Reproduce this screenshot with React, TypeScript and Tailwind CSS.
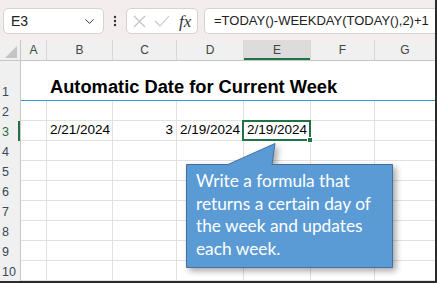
import { ChevronDown } from "lucide-react";

const cols = ["A", "B", "C", "D", "E", "F", "G"];
const colWidths = ["w-[26px]", "w-[66px]", "w-[64px]", "w-[67px]", "w-[67px]", "w-[64px]", "flex-1"];

const cellFont = { fontFamily: '"Liberation Sans", Arial, sans-serif' };

const RowHeader = ({ n, active }: { n: number; active?: boolean }) => (
  <div
    className={`w-[21px] shrink-0 flex items-end pl-[2px] pb-[3px] bg-[#f0f0f0] border-r border-[#c6c6c6] text-[12.5px] leading-none whitespace-nowrap ${
      active ? "text-[#1e6b41] shadow-[inset_-2px_0_0_#217346]" : "text-[#3a4654]"
    }`}
    style={cellFont}
  >
    {n}
  </div>
);

const EmptyRow = ({ n }: { n: number }) => (
  <div className="flex h-[20px]">
    <RowHeader n={n} />
    {colWidths.map((w, i) => (
      <div key={i} className={`${w} shrink-0 border-r border-b border-[#e1e1e1] last:border-r-0`} />
    ))}
  </div>
);

const App = () => {
  return (
    <div className="relative w-[437px] h-[283px] bg-white border-r-2 border-b-2 border-[#2b2b2b] overflow-hidden">
      {/* formula bar */}
      <div className="h-[40px] bg-[#f3eded] flex items-start pt-[8px] pl-[3px]">
        <div className="w-[101px] shrink-0 h-[26px] bg-white border border-[#d6d2d2] rounded-[5px] flex items-center justify-between pl-[7px] pr-[6px]">
          <span className="text-[14px] text-[#222]" style={cellFont}>
            E3
          </span>
          <ChevronDown size={15} strokeWidth={1.6} className="text-[#333]" />
        </div>
        <div className="w-[22px] shrink-0 h-[26px] flex items-center justify-center">
          <svg width="4" height="12" viewBox="0 0 4 12">
            <circle cx="2" cy="2" r="1.2" fill="#333" />
            <circle cx="2" cy="6" r="1.2" fill="#333" />
            <circle cx="2" cy="10" r="1.2" fill="#333" />
          </svg>
        </div>
        <div className="w-[72px] shrink-0 h-[26px] bg-white border border-[#d6d2d2] rounded-[5px] flex items-center pl-[6px] gap-[8px]">
          <svg width="13" height="13" viewBox="0 0 13 13" fill="none" stroke="#c2c2c2" strokeWidth="1.1">
            <path d="M1 1 L12 12 M12 1 L1 12" />
          </svg>
          <svg width="16" height="12" viewBox="0 0 16 12" fill="none" stroke="#c2c2c2" strokeWidth="1.1">
            <path d="M1 6 L6 11 L15 1" />
          </svg>
          <span
            className="italic text-[17px] leading-none text-[#333] ml-[1px]"
            style={{ fontFamily: '"Liberation Serif", "Times New Roman", serif' }}
          >
            fx
          </span>
        </div>
        <div className="ml-[6px] flex-1 min-w-0 h-[26px] bg-white border border-r-0 border-[#d6d2d2] rounded-l-[5px] flex items-center pl-[9px]">
          <span className="text-[13px] text-[#222] whitespace-nowrap" style={cellFont}>
            =TODAY()-WEEKDAY(TODAY(),2)+1
          </span>
        </div>
      </div>

      {/* column headers */}
      <div className="flex h-[21px] bg-[#f0f0f0] border-b border-[#c6c6c6]">
        <div className="w-[21px] shrink-0 border-r border-[#c6c6c6] flex items-end justify-end pr-[3px] pb-[2px]">
          <svg width="12" height="12" viewBox="0 0 12 12">
            <path d="M12 0 L12 12 L0 12 Z" fill="#c4c4c4" />
          </svg>
        </div>
        {cols.map((c, i) => (
          <div
            key={c}
            className={`${colWidths[i]} shrink-0 flex items-center justify-center text-[12px] text-[#444] border-r border-[#d8d8d8] last:border-r-0 ${
              c === "E" ? "bg-[#dcdcdc] shadow-[inset_0_-2px_0_#217346]" : ""
            }`}
            style={cellFont}
          >
            {c}
          </div>
        ))}
      </div>

      {/* row 1 title */}
      <div className="flex h-[40px]">
        <RowHeader n={1} />
        <div className="flex-1 border-b border-[#3a9ad6] flex items-end pl-[29px] pb-[4px]">
          <span className="text-[18.3px] font-bold text-black leading-none whitespace-nowrap" style={cellFont}>
            Automatic Date for Current Week
          </span>
        </div>
      </div>

      <EmptyRow n={2} />

      {/* row 3 data */}
      <div className="flex h-[20px] text-[13.5px] text-black leading-none" style={cellFont}>
        <RowHeader n={3} active />
        <div className="w-[26px] shrink-0 border-r border-b border-[#e1e1e1]" />
        <div className="w-[66px] shrink-0 border-r border-b border-[#e1e1e1] flex items-end pl-[3px] pb-[4px]">2/21/2024</div>
        <div className="w-[64px] shrink-0 border-r border-b border-[#e1e1e1] flex items-end justify-end pr-[3px] pb-[4px]">3</div>
        <div className="w-[67px] shrink-0 border-r border-b border-[#e1e1e1] flex items-end justify-end pr-[3px] pb-[4px]">2/19/2024</div>
        <div className="relative w-[67px] shrink-0 border-r border-b border-[#e1e1e1] flex items-end justify-end pr-[3px] pb-[4px]">
          2/19/2024
          <div className="absolute -left-[2px] -top-[1px] -right-[1px] -bottom-[1px] border-2 border-[#217346]" />
          <div className="absolute -right-[3px] -bottom-[3px] w-[6px] h-[6px] bg-[#217346] border border-white" />
        </div>
        <div className="w-[64px] shrink-0 border-r border-b border-[#e1e1e1]" />
        <div className="flex-1 border-b border-[#e1e1e1]" />
      </div>

      {[4, 5, 6, 7, 8, 9, 10].map((n) => (
        <EmptyRow key={n} n={n} />
      ))}

      {/* callout */}
      <div className="absolute left-[186px] top-[143px] w-[208px] h-[126px]">
        <svg
          width="208"
          height="126"
          viewBox="0 0 208 126"
          className="absolute inset-0 overflow-visible"
          style={{ filter: "drop-shadow(3px 3px 3px rgba(0,0,0,0.35))" }}
        >
          <path d="M0.5 21.5 L42 21.5 L89 0.5 L86 21.5 L206.5 21.5 L206.5 124.5 L0.5 124.5 Z" fill="#5b9bd5" stroke="#41719c" strokeWidth="1" />
        </svg>
        <div
          className="absolute left-[10px] top-[27px] text-white text-[17.3px] leading-[22.5px] w-[195px]"
          style={{ fontFamily: "Lato, Calibri, sans-serif" }}
        >
          Write a formula that
          <br />
          returns a certain day of
          <br />
          the week and updates
          <br />
          each week.
        </div>
      </div>
    </div>
  );
};

export default App;
